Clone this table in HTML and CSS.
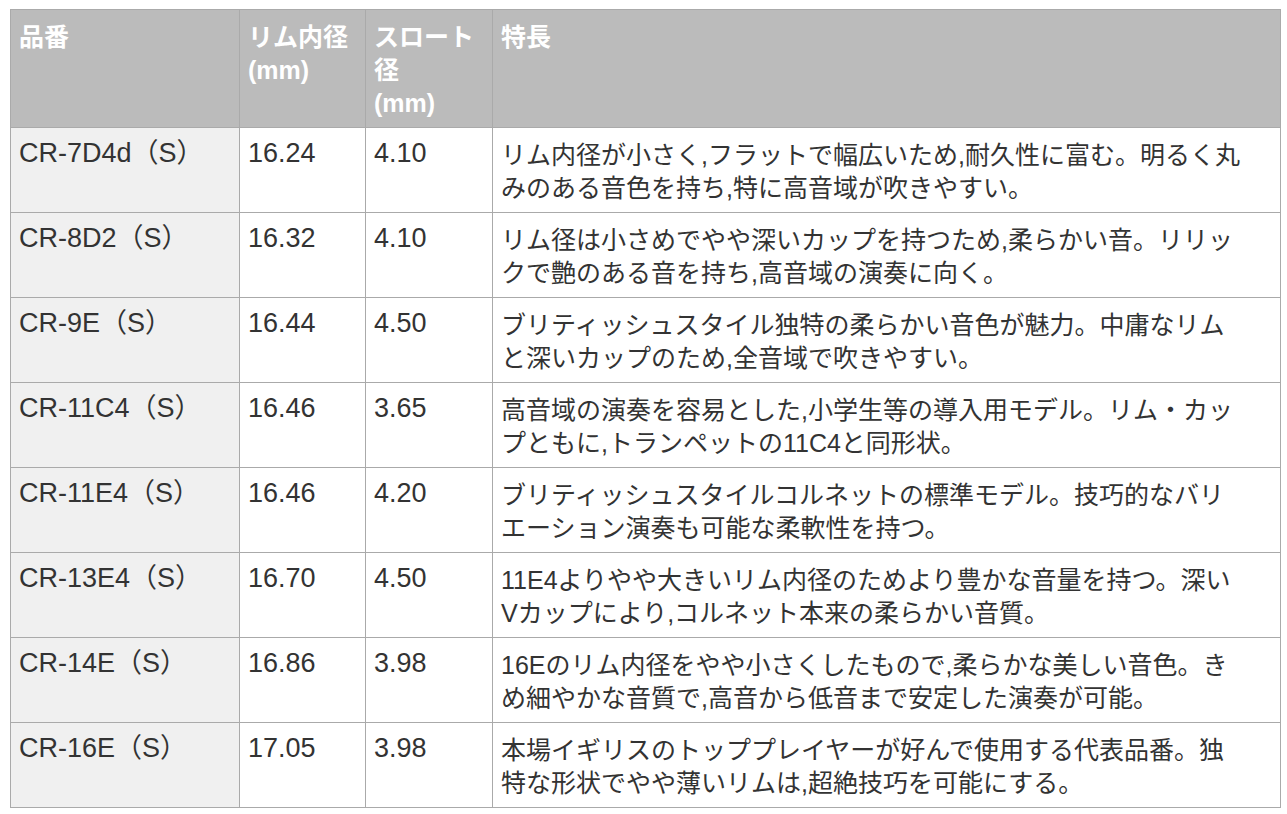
FILE: index.html
```html
<!DOCTYPE html>
<html lang="ja">
<head>
<meta charset="utf-8">
<title>マウスピース一覧</title>
<link rel="stylesheet" href="styles.css">
</head>
<body>
<table class="spec">
  <colgroup>
    <col class="c-name">
    <col class="c-rim">
    <col class="c-throat">
    <col class="c-desc">
  </colgroup>
  <thead>
    <tr>
      <th>品番</th>
      <th>リム内径<br>(mm)</th>
      <th>スロート<br>径<br>(mm)</th>
      <th>特長</th>
    </tr>
  </thead>
  <tbody>
    <tr>
      <td class="name">CR-7D4d（S）</td>
      <td class="num">16.24</td>
      <td class="num">4.10</td>
      <td class="desc">リム内径が小さく,フラットで幅広いため,耐久性に富む。明るく丸<br>みのある音色を持ち,特に高音域が吹きやすい。</td>
    </tr>
    <tr>
      <td class="name">CR-8D2（S）</td>
      <td class="num">16.32</td>
      <td class="num">4.10</td>
      <td class="desc">リム径は小さめでやや深いカップを持つため,柔らかい音。リリッ<br>クで艶のある音を持ち,高音域の演奏に向く。</td>
    </tr>
    <tr>
      <td class="name">CR-9E（S）</td>
      <td class="num">16.44</td>
      <td class="num">4.50</td>
      <td class="desc">ブリティッシュスタイル独特の柔らかい音色が魅力。中庸なリム<br>と深いカップのため,全音域で吹きやすい。</td>
    </tr>
    <tr>
      <td class="name">CR-11C4（S）</td>
      <td class="num">16.46</td>
      <td class="num">3.65</td>
      <td class="desc">高音域の演奏を容易とした,小学生等の導入用モデル。リム・カッ<br>プともに,トランペットの11C4と同形状。</td>
    </tr>
    <tr>
      <td class="name">CR-11E4（S）</td>
      <td class="num">16.46</td>
      <td class="num">4.20</td>
      <td class="desc">ブリティッシュスタイルコルネットの標準モデル。技巧的なバリ<br>エーション演奏も可能な柔軟性を持つ。</td>
    </tr>
    <tr>
      <td class="name">CR-13E4（S）</td>
      <td class="num">16.70</td>
      <td class="num">4.50</td>
      <td class="desc">11E4よりやや大きいリム内径のためより豊かな音量を持つ。深い<br>Vカップにより,コルネット本来の柔らかい音質。</td>
    </tr>
    <tr>
      <td class="name">CR-14E（S）</td>
      <td class="num">16.86</td>
      <td class="num">3.98</td>
      <td class="desc">16Eのリム内径をやや小さくしたもので,柔らかな美しい音色。き<br>め細やかな音質で,高音から低音まで安定した演奏が可能。</td>
    </tr>
    <tr>
      <td class="name">CR-16E（S）</td>
      <td class="num">17.05</td>
      <td class="num">3.98</td>
      <td class="desc">本場イギリスのトッププレイヤーが好んで使用する代表品番。独<br>特な形状でやや薄いリムは,超絶技巧を可能にする。</td>
    </tr>
  </tbody>
</table>
</body>
</html>
```

FILE: styles.css
```css
html, body {
  margin: 0;
  padding: 0;
  background: #ffffff;
}

body {
  padding: 9px 0 0 10px;
  font-family: "Liberation Sans", "Noto Sans CJK JP", sans-serif;
  font-size: 25px;
  line-height: 33px;
  color: #333333;
}

.spec {
  border-collapse: collapse;
  table-layout: fixed;
  width: 1270px;
}

.c-name { width: 229px; }
.c-rim { width: 126px; }
.c-throat { width: 127px; }
.c-desc { width: 788px; }

.spec th,
.spec td {
  border: 1px solid #aaaaaa;
  padding: 11px 8px 7px 8px;
  text-align: left;
  vertical-align: top;
}

.spec th {
  background: #bbbbbb;
  color: #ffffff;
  font-weight: bold;
}

.spec td.name {
  background: #f0f0f0;
}

.spec td.name,
.spec td.num {
  font-size: 27px;
  padding-top: 9px;
  padding-bottom: 9px;
}
```
